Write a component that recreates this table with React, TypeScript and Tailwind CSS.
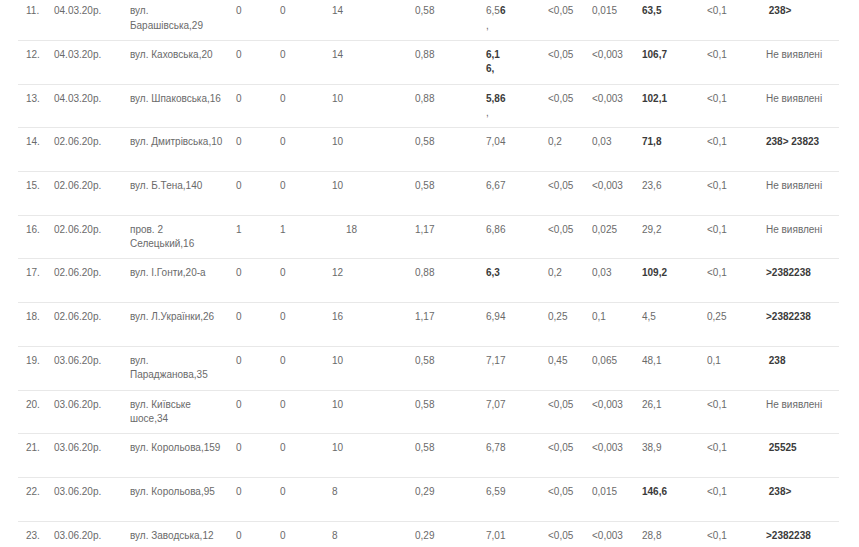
import React from "react";

type Cell = React.ReactNode;

const B = ({ children }: { children: React.ReactNode }) => (
  <span className="font-bold text-[#3a3a3a]">{children}</span>
);

const rows: Cell[][] = [
  ["11.", "04.03.20р.", <>вул.<br />Барашівська,29</>, "0", "0", "14", "0,58", <>6,5<B>6</B><br />,</>, "<0,05", "0,015", <B>63,5</B>, "<0,1", <B>{"\u00a0238>"}</B>],
  ["12.", "04.03.20р.", "вул. Каховська,20", "0", "0", "14", "0,88", <B>6,1<br />6,</B>, "<0,05", "<0,003", <B>106,7</B>, "<0,1", "Не виявлені"],
  ["13.", "04.03.20р.", "вул. Шпаковська,16", "0", "0", "10", "0,88", <><B>5,86</B><br />,</>, "<0,05", "<0,003", <B>102,1</B>, "<0,1", "Не виявлені"],
  ["14.", "02.06.20р.", "вул. Дмитрівська,10", "0", "0", "10", "0,58", "7,04", "0,2", "0,03", <B>71,8</B>, "<0,1", <B>238&gt; 23823</B>],
  ["15.", "02.06.20р.", "вул. Б.Тена,140", "0", "0", "10", "0,58", "6,67", "<0,05", "<0,003", "23,6", "<0,1", "Не виявлені"],
  ["16.", "02.06.20р.", <>пров. 2<br />Селецький,16</>, "1", "1", <span className="pl-[14px]">18</span>, "1,17", "6,86", "<0,05", "0,025", "29,2", "<0,1", "Не виявлені"],
  ["17.", "02.06.20р.", "вул. І.Гонти,20-а", "0", "0", "12", "0,88", <B>6,3</B>, "0,2", "0,03", <B>109,2</B>, "<0,1", <B>&gt;2382238</B>],
  ["18.", "02.06.20р.", "вул. Л.Українки,26", "0", "0", "16", "1,17", "6,94", "0,25", "0,1", "4,5", "0,25", <B>&gt;2382238</B>],
  ["19.", "03.06.20р.", <>вул.<br />Параджанова,35</>, "0", "0", "10", "0,58", "7,17", "0,45", "0,065", "48,1", "0,1", <B>{"\u00a0238"}</B>],
  ["20.", "03.06.20р.", <>вул. Київське<br />шосе,34</>, "0", "0", "10", "0,58", "7,07", "<0,05", "<0,003", "26,1", "<0,1", "Не виявлені"],
  ["21.", "03.06.20р.", "вул. Корольова,159", "0", "0", "10", "0,58", "6,78", "<0,05", "<0,003", "38,9", "<0,1", <B>{"\u00a025525"}</B>],
  ["22.", "03.06.20р.", "вул. Корольова,95", "0", "0", "8", "0,29", "6,59", "<0,05", "0,015", <B>146,6</B>, "<0,1", <B>{"\u00a0238>"}</B>],
  ["23.", "03.06.20р.", "вул. Заводська,12", "0", "0", "8", "0,29", "7,01", "<0,05", "<0,003", "28,8", "<0,1", <B>&gt;2382238</B>],
];

const widths = [
  "w-[36px] pl-[8px]",
  "w-[76px]",
  "w-[106px]",
  "w-[44px]",
  "w-[52px]",
  "w-[83px]",
  "w-[71px]",
  "w-[62px]",
  "w-[44px]",
  "w-[50px]",
  "w-[65px]",
  "w-[59px]",
  "w-[73px]",
];

export default function App() {
  return (
    <div className="w-[859px] h-[547px] overflow-hidden bg-white">
      <div
        className="ml-[18px] w-[821px] mt-[-3.7px] text-[10px] leading-[14.3px] text-[#6a6a6a]"
        style={{ fontFamily: '"Liberation Sans", Arial, sans-serif' }}
      >
        {rows.map((r, i) => (
          <div key={i} className="flex h-[43.7px] border-t border-[#e8e8e8] pt-[7px]">
            {r.map((c, j) => (
              <div key={j} className={`${widths[j]} shrink-0 whitespace-nowrap`}>
                {c}
              </div>
            ))}
          </div>
        ))}
      </div>
    </div>
  );
}
